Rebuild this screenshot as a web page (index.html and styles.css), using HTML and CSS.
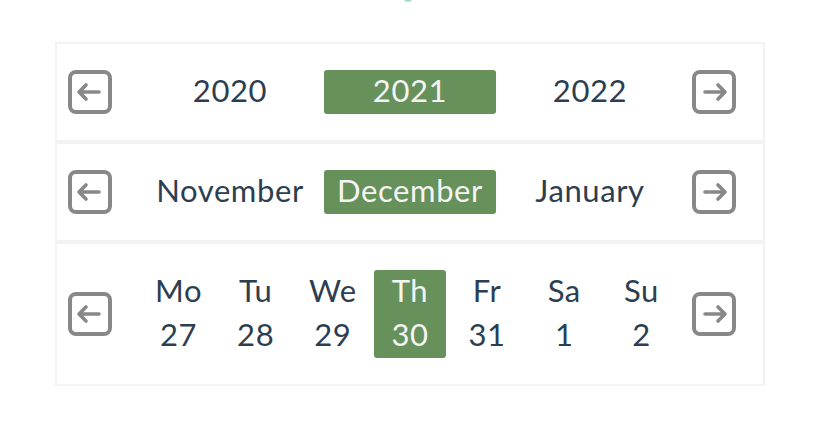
FILE: index.html
```html
<!DOCTYPE html>
<html>
<head>
<meta charset="utf-8">
<link rel="stylesheet" href="styles.css">
</head>
<body>
<div class="logo-tip"></div>
<div class="picker">
  <div class="row">
    <button class="nav-btn" aria-label="Previous year">
      <svg viewBox="0 0 44 44" width="44" height="44"><rect x="2" y="2" width="40" height="40" rx="6"/><path class="arrow" d="M31 22H11M18 15L11 22l7 7"/></svg>
    </button>
    <div class="items">
      <div class="item"><span class="label">2020</span></div>
      <div class="item"><span class="label active">2021</span></div>
      <div class="item"><span class="label">2022</span></div>
    </div>
    <button class="nav-btn" aria-label="Next year">
      <svg viewBox="0 0 44 44" width="44" height="44"><rect x="2" y="2" width="40" height="40" rx="6"/><path class="arrow" d="M13 22h20M26 15L33 22l-7 7"/></svg>
    </button>
  </div>
  <div class="row">
    <button class="nav-btn" aria-label="Previous month">
      <svg viewBox="0 0 44 44" width="44" height="44"><rect x="2" y="2" width="40" height="40" rx="6"/><path class="arrow" d="M31 22H11M18 15L11 22l7 7"/></svg>
    </button>
    <div class="items">
      <div class="item"><span class="label">November</span></div>
      <div class="item"><span class="label active">December</span></div>
      <div class="item"><span class="label">January</span></div>
    </div>
    <button class="nav-btn" aria-label="Next month">
      <svg viewBox="0 0 44 44" width="44" height="44"><rect x="2" y="2" width="40" height="40" rx="6"/><path class="arrow" d="M13 22h20M26 15L33 22l-7 7"/></svg>
    </button>
  </div>
  <div class="row row-days">
    <button class="nav-btn" aria-label="Previous week">
      <svg viewBox="0 0 44 44" width="44" height="44"><rect x="2" y="2" width="40" height="40" rx="6"/><path class="arrow" d="M31 22H11M18 15L11 22l7 7"/></svg>
    </button>
    <div class="days">
      <div class="day"><span class="day-box"><span class="dl">Mo</span><span class="dl">27</span></span></div>
      <div class="day"><span class="day-box"><span class="dl">Tu</span><span class="dl">28</span></span></div>
      <div class="day"><span class="day-box"><span class="dl">We</span><span class="dl">29</span></span></div>
      <div class="day"><span class="day-box active"><span class="dl">Th</span><span class="dl">30</span></span></div>
      <div class="day"><span class="day-box"><span class="dl">Fr</span><span class="dl">31</span></span></div>
      <div class="day"><span class="day-box"><span class="dl">Sa</span><span class="dl">1</span></span></div>
      <div class="day"><span class="day-box"><span class="dl">Su</span><span class="dl">2</span></span></div>
    </div>
    <button class="nav-btn" aria-label="Next week">
      <svg viewBox="0 0 44 44" width="44" height="44"><rect x="2" y="2" width="40" height="40" rx="6"/><path class="arrow" d="M13 22h20M26 15L33 22l-7 7"/></svg>
    </button>
  </div>
</div>
</body>
</html>
```
FILE: styles.css
```css
html, body {
  margin: 0;
  padding: 0;
  background: #ffffff;
}
body {
  font-family: Lato, "Liberation Sans", sans-serif;
  font-weight: 400;
  color: #2c3e50;
  position: relative;
}
.logo-tip {
  position: absolute;
  left: 404px;
  top: -4px;
  width: 8px;
  height: 6px;
  border-radius: 50%;
  background: #a8dcc4;
}
.picker {
  width: 710px;
  margin: 42px 0 0 55px;
}
.row {
  box-sizing: border-box;
  height: 100px;
  border: 2px solid #f3f3f3;
  display: flex;
  align-items: center;
  padding: 0 27px 0 11px;
}
.row-days {
  height: 144px;
}
.nav-btn {
  flex: none;
  width: 44px;
  height: 44px;
  padding: 0;
  margin: 0;
  border: 0;
  background: none;
  display: block;
}
.nav-btn svg {
  display: block;
  fill: none;
  stroke: #888888;
  stroke-width: 4;
  stroke-linecap: round;
  stroke-linejoin: round;
}
.nav-btn svg .arrow {
  stroke-width: 3.6;
}
.items, .days {
  flex: none;
  width: 540px;
  margin: 0 12px 0 28px;
  display: flex;
}
.item {
  width: 180px;
  display: flex;
  justify-content: center;
}
.label {
  box-sizing: border-box;
  height: 44px;
  line-height: 40px;
  padding-bottom: 4px;
  font-size: 31px;
  letter-spacing: 0.6px;
  white-space: nowrap;
}
.label.active {
  width: 172px;
  text-align: center;
  background: #66915b;
  color: #f4f4f4;
  border-radius: 3px;
}
.days {
  display: grid;
  grid-template-columns: repeat(7, 1fr);
}
.day {
  display: flex;
  justify-content: center;
}
.day-box {
  width: 72px;
  height: 88px;
  display: flex;
  flex-direction: column;
  align-items: center;
  border-radius: 3px;
}
.day-box.active {
  background: #66915b;
  color: #f4f4f4;
}
.dl {
  display: block;
  box-sizing: border-box;
  height: 44px;
  line-height: 40px;
  padding-bottom: 4px;
  font-size: 31px;
  letter-spacing: 0.6px;
}
```
